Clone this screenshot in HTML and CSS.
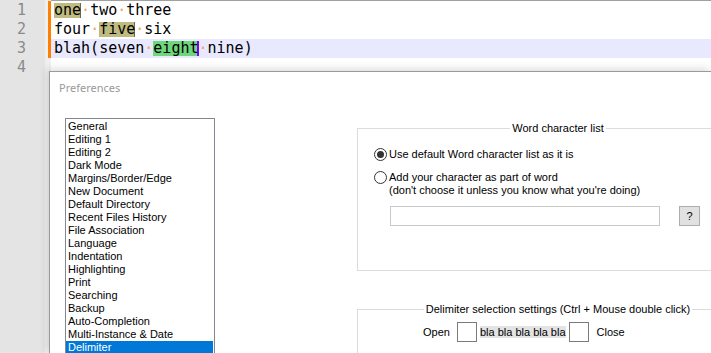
FILE: index.html
```html
<!DOCTYPE html>
<html lang="en">
<head>
    <meta charset="UTF-8">
    <meta name="viewport" content="width=device-width, initial-scale=1.0">
    <title>Notepad++ Preferences</title>
    <link rel="stylesheet" href="styles.css">
</head>
<body>

    <!-- Editor behind the dialog -->
    <div class="editor">
        <div class="line-numbers">
            <div class="num">1</div>
            <div class="num">2</div>
            <div class="num">3</div>
            <div class="num">4</div>
        </div>
        <div class="change-margin">
            <div class="changed"></div>
        </div>
        <div class="text-area">
            <div class="line"><span class="smart">one</span><span class="ws">·</span>two<span class="ws">·</span>three</div>
            <div class="line">four<span class="ws">·</span><span class="smart">five</span><span class="ws">·</span>six</div>
            <div class="line current">blah(seven<span class="ws">·</span><span class="mark">eight</span><span class="ws">·</span>nine)</div>
            <div class="line"></div>
        </div>
    </div>

    <!-- Preferences dialog (floating window, cut by the screen edge) -->
    <div class="dialog">
        <div class="title-bar">Preferences</div>

        <div class="dialog-body">
            <ul class="listbox">
                <li>General</li>
                <li>Editing 1</li>
                <li>Editing 2</li>
                <li>Dark Mode</li>
                <li>Margins/Border/Edge</li>
                <li>New Document</li>
                <li>Default Directory</li>
                <li>Recent Files History</li>
                <li>File Association</li>
                <li>Language</li>
                <li>Indentation</li>
                <li>Highlighting</li>
                <li>Print</li>
                <li>Searching</li>
                <li>Backup</li>
                <li>Auto-Completion</li>
                <li>Multi-Instance &amp; Date</li>
                <li class="selected">Delimiter</li>
            </ul>

            <div class="panel">
                <fieldset class="group word-group">
                    <legend>Word character list</legend>

                    <div class="option first">
                        <span class="radio checked"></span>
                        <span>Use default Word character list as it is</span>
                    </div>
                    <div class="option second">
                        <span class="radio"></span>
                        <span>Add your character as part of word<br>(don't choose it unless you know what you're doing)</span>
                    </div>

                    <div class="input-row">
                        <input type="text" class="char-input">
                        <button class="help-btn">?</button>
                    </div>
                </fieldset>

                <fieldset class="group delim-group">
                    <legend>Delimiter selection settings (Ctrl + Mouse double click)</legend>

                    <div class="delim-row">
                        <span class="delim-label">Open</span>
                        <span class="delim-box open-box"></span>
                        <span class="sample">bla bla bla bla bla</span>
                        <span class="delim-box close-box"></span>
                        <span class="delim-label close-label">Close</span>
                    </div>
                </fieldset>
            </div>
        </div>
    </div>

</body>
</html>
```

FILE: styles.css
```css
/* Page */
body {
    margin: 0;
    width: 711px;
    height: 353px;
    overflow: hidden;
    position: relative;
    background: #fff;
}

/* Editor */
.editor {
    display: flex;
    height: 353px;
    font-family: "DejaVu Sans Mono", monospace;
    font-size: 15px;
    color: #000;
}

.line-numbers {
    width: 45px;
    background: #e4e4e4;
    padding-top: 1px;
}

.num {
    height: 19px;
    line-height: 19px;
    text-align: right;
    padding-right: 19px;
    color: #8a8a8a;
}

.change-margin {
    width: 6px;
    background: #efefef;
    padding-top: 1px;
}

.changed {
    width: 3px;
    height: 57px;
    margin-left: 3px;
    background: #ff8000;
}

.text-area {
    flex: 1;
    border-top: 1px solid #a0a0a0;
}

.line {
    height: 19px;
    line-height: 19px;
    padding-left: 3px;
    white-space: pre;
}

.line.current {
    background: #e8e8ff;
}

.ws {
    color: #f5a35a;
}

.smart,
.mark {
    display: inline-block;
    line-height: 15px;
    vertical-align: top;
    margin-top: 2px;
}

.smart {
    background: #bfbb80;
    box-shadow: inset -1px 0 0 #6e6a48;
}

.mark {
    background: #6ed67b;
    box-shadow: inset -2px 0 0 #8000ff;
}

/* Dialog window - runs off the right and bottom of the screen */
.dialog {
    position: absolute;
    top: 71px;
    left: 49px;
    width: 662px;
    height: 282px;
    box-sizing: border-box;
    overflow: hidden;
    background: #fff;
    border-top: 1px solid #9a9a9a;
    border-left: 1px solid #9a9a9a;
    box-shadow: -2px -2px 8px rgba(0, 0, 0, 0.15);
    font-family: "Liberation Sans", Arial, sans-serif;
    font-size: 11px;
    color: #000;
}

.title-bar {
    height: 31px;
    line-height: 31px;
    padding-left: 9px;
    font-family: "Noto Sans", sans-serif;
    font-size: 11px;
    color: #999;
}

.dialog-body {
    display: flex;
    align-items: flex-start;
    padding: 15px 0 0 15px;
}

/* Category list */
.listbox {
    list-style: none;
    margin: 0;
    padding: 1px 0 0 0;
    width: 150px;
    height: 235px;
    box-sizing: border-box;
    border: 1px solid #828790;
    border-bottom: none;
    flex: none;
}

.listbox li {
    height: 13px;
    line-height: 13px;
    padding-left: 2px;
    margin-right: 1px;
    white-space: nowrap;
}

.listbox li.selected {
    background: #0078d7;
    color: #fff;
}

/* Right panel */
.panel {
    flex: none;
    width: 354px;
    height: 231px;
    overflow: hidden;
    margin-left: 142px;
    margin-top: 4px;
}

.group {
    width: 402px;
    box-sizing: border-box;
    margin: 0;
    padding: 0 16px;
    border: 1px solid #dcdcdc;
}

.group legend {
    margin: 0 auto;
    padding: 0 2px;
    line-height: 13px;
}

.word-group {
    padding-bottom: 44px;
}

.delim-group {
    margin-top: 32px;
    height: 80px;
}

/* Radio options */
.option {
    display: flex;
    align-items: flex-start;
    line-height: 13px;
}

.option.first {
    margin-top: 13px;
}

.option.second {
    margin-top: 10px;
}

.radio {
    flex: none;
    width: 13px;
    height: 13px;
    box-sizing: border-box;
    border: 1px solid #333;
    border-radius: 50%;
    margin-right: 2px;
    display: flex;
    align-items: center;
    justify-content: center;
}

.radio.checked::after {
    content: "";
    width: 7px;
    height: 7px;
    border-radius: 50%;
    background: #333;
}

.input-row {
    display: flex;
    margin-top: 9px;
    padding-left: 16px;
}

.char-input {
    width: 270px;
    height: 20px;
    box-sizing: border-box;
    margin: 0;
    border: 1px solid #c8c8c8;
    background: #fff;
}

.help-btn {
    width: 21px;
    height: 20px;
    box-sizing: border-box;
    margin: 0 0 0 19px;
    padding: 0;
    border: 1px solid #adadad;
    background: #e1e1e1;
    font-family: "Liberation Sans", Arial, sans-serif;
    font-size: 11px;
    color: #000;
}

/* Delimiter row */
.delim-row {
    display: flex;
    align-items: center;
    margin-top: 6px;
    padding-left: 49px;
}

.delim-box {
    width: 20px;
    height: 20px;
    box-sizing: border-box;
    border: 1px solid #7a7a7a;
    background: #fff;
}

.open-box {
    margin-left: 7px;
}

.sample {
    margin: 0 3px 0 3px;
    background: #e3e3e3;
    line-height: 12px;
    white-space: nowrap;
}

.close-label {
    margin-left: 8px;
}
```
